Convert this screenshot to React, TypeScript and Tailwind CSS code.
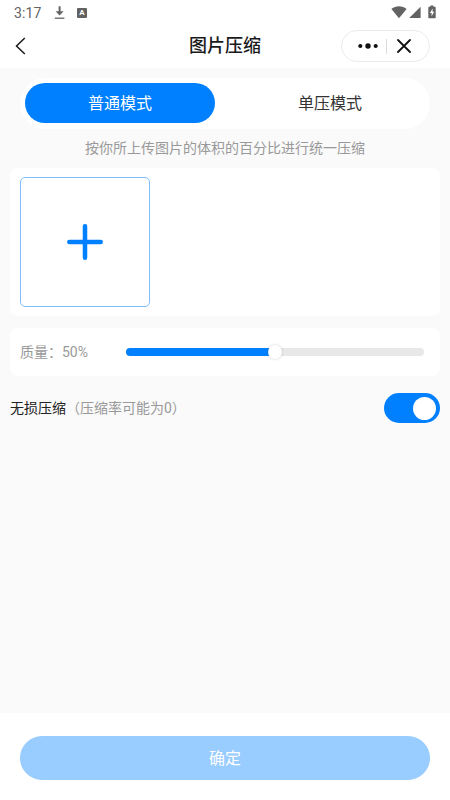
import { useState } from 'react'
import clsx from 'clsx'

const MODES = [
  { key: 'normal', label: '普通模式' },
  { key: 'single', label: '单压模式' },
]

function StatusBar() {
  return (
    <div className="flex h-6 shrink-0 items-center pl-3.5 pr-[14px] text-[#636363]">
      <span className="w-10 pt-0.5 font-['Roboto',sans-serif] text-[14px] leading-5 tracking-[0.1px]">3:17</span>
      <svg className="mt-px" width="12" height="14" viewBox="0 0 12 14" fill="none" stroke="currentColor">
        <path d="M5.6 0.3V7" strokeWidth="2" />
        <path d="M1.6 5.3h8L5.6 9.6z" fill="currentColor" stroke="none" />
        <path d="M0.8 12.2h9.6" strokeWidth="1.3" />
      </svg>
      <span className="ml-[11px] mt-0.5 flex h-[10px] w-[10px] items-center justify-center rounded-[1px] bg-[#636363] font-['Roboto',sans-serif] text-[8px] font-bold leading-none text-white">
        A
      </span>
      <div className="ml-auto flex items-center">
        <svg width="16" height="14" viewBox="0 0 16 14" fill="currentColor">
          <path d="M8 13.2 0.4 3.9C4.7 0.3 11.3 0.3 15.6 3.9z" />
        </svg>
        <svg className="ml-0.5" width="12" height="14" viewBox="0 0 12 14" fill="currentColor">
          <path d="M11.6 1.8V13H0.2z" />
        </svg>
        <svg className="ml-[7px]" width="8" height="14" viewBox="0 0 8 14">
          <path d="M2.3 0.5h3.2v1.2H7q.7 0 .7.7v10q0 .8-.7.8H1q-.7 0-.7-.8v-10q0-.7.7-.7h1.3z" fill="currentColor" />
          <path d="M4.6 3.6 1.9 8h1.7v3.2L6.2 6.8H4.6z" fill="white" />
        </svg>
      </div>
    </div>
  )
}

function NavBar() {
  return (
    <div className="grid h-11 shrink-0 grid-cols-[1fr_auto_1fr] items-center">
      <button className="ml-[15px] w-3" aria-label="返回">
        <svg width="12" height="18" viewBox="0 0 12 18" fill="none" stroke="#1a1a1a" strokeWidth="1.5">
          <path d="M9.8 1 1.5 9l8.3 8" />
        </svg>
      </button>
      <h1 className="text-[18px] font-medium leading-6 text-[#1a1a1a]">图片压缩</h1>
      <div className="ml-auto mr-5 flex h-8 w-[89px] items-center rounded-full border border-[#ebebeb] bg-white">
        <button className="flex w-[44px] justify-center pl-[7px]" aria-label="更多">
          <svg width="20" height="8" viewBox="0 0 20 8" fill="#111">
            <circle cx="2.3" cy="4" r="2.1" />
            <circle cx="10" cy="4" r="2.7" />
            <circle cx="17.7" cy="4" r="2.1" />
          </svg>
        </button>
        <span className="h-[15px] w-px bg-[#dcdcdc]" />
        <button className="flex w-[34px] justify-center" aria-label="关闭">
          <svg width="14" height="14" viewBox="0 0 14 14" stroke="#111" strokeWidth="1.8" strokeLinecap="round">
            <path d="M1 1l12 12M13 1 1 13" />
          </svg>
        </button>
      </div>
    </div>
  )
}

function QualitySlider({ value }: { value: number }) {
  return (
    <div className="mt-3 flex h-12 items-center rounded-lg bg-white pl-2.5 pr-4">
      <span className="w-[106px] text-[14px] text-[#999]">质量：{value}%</span>
      <div className="flex h-2 flex-1 items-center rounded-full bg-[#e8e8e8]">
        <div className="h-2 rounded-l-full bg-[#007fff]" style={{ width: `${value}%` }} />
        <div className="-ml-[7px] h-[14px] w-[14px] rounded-full bg-white shadow-[0_0_3px_rgba(0,0,0,0.2)]" />
      </div>
    </div>
  )
}

export default function App() {
  const [mode, setMode] = useState('normal')
  const [lossless, setLossless] = useState(true)

  return (
    <div className="flex h-[800px] w-[450px] flex-col overflow-hidden bg-[#fafafa] font-['Roboto','Noto_Sans_CJK_SC',sans-serif]">
      <header className="flex h-[68px] shrink-0 flex-col bg-white">
        <StatusBar />
        <NavBar />
      </header>

      <main className="flex flex-1 flex-col px-2.5 pt-2.5">
        <div className="mx-2.5 flex h-[51px] gap-5 rounded-full bg-white px-[5px] pt-[5px]">
          {MODES.map((m) => (
            <button
              key={m.key}
              onClick={() => setMode(m.key)}
              className={clsx(
                'h-10 flex-1 rounded-full pt-0.5 text-[16px]',
                mode === m.key ? 'bg-[#007fff] text-white' : 'text-[#333]',
              )}
            >
              {m.label}
            </button>
          ))}
        </div>
        <p className="mt-2 text-center text-[14px] leading-[22px] text-[#999]">
          按你所上传图片的体积的百分比进行统一压缩
        </p>

        <section className="mt-[9px] h-[148px] rounded-lg bg-white px-2.5 pt-[9px]">
          <button
            className="flex h-[130px] w-[130px] items-center justify-center rounded-[5px] border border-[#80bfff]"
            aria-label="添加图片"
          >
            <svg width="36" height="36" viewBox="0 0 36 36" stroke="#007fff" strokeWidth="4.5" strokeLinecap="round">
              <path d="M18 2.3v31.4M2.3 18h31.4" />
            </svg>
          </button>
        </section>

        <QualitySlider value={50} />

        <div className="mt-[17px] flex h-[30px] items-center text-[14px]">
          <span className="text-[#222]">无损压缩</span>
          <span className="text-[#999]">（压缩率可能为0）</span>
          <button
            role="switch"
            aria-checked={lossless}
            aria-label="无损压缩"
            onClick={() => setLossless(!lossless)}
            className={clsx(
              'ml-auto flex h-[30px] w-14 items-center rounded-full px-1',
              lossless ? 'justify-end bg-[#007fff]' : 'justify-start bg-[#ddd]',
            )}
          >
            <span className="h-[23px] w-[23px] rounded-full bg-white" />
          </button>
        </div>
      </main>

      <footer className="h-[87px] shrink-0 bg-white px-5 pt-[23px]">
        <button className="h-11 w-full rounded-full bg-[#99ccff] pt-0.5 text-[16px] text-white">确定</button>
      </footer>
    </div>
  )
}
